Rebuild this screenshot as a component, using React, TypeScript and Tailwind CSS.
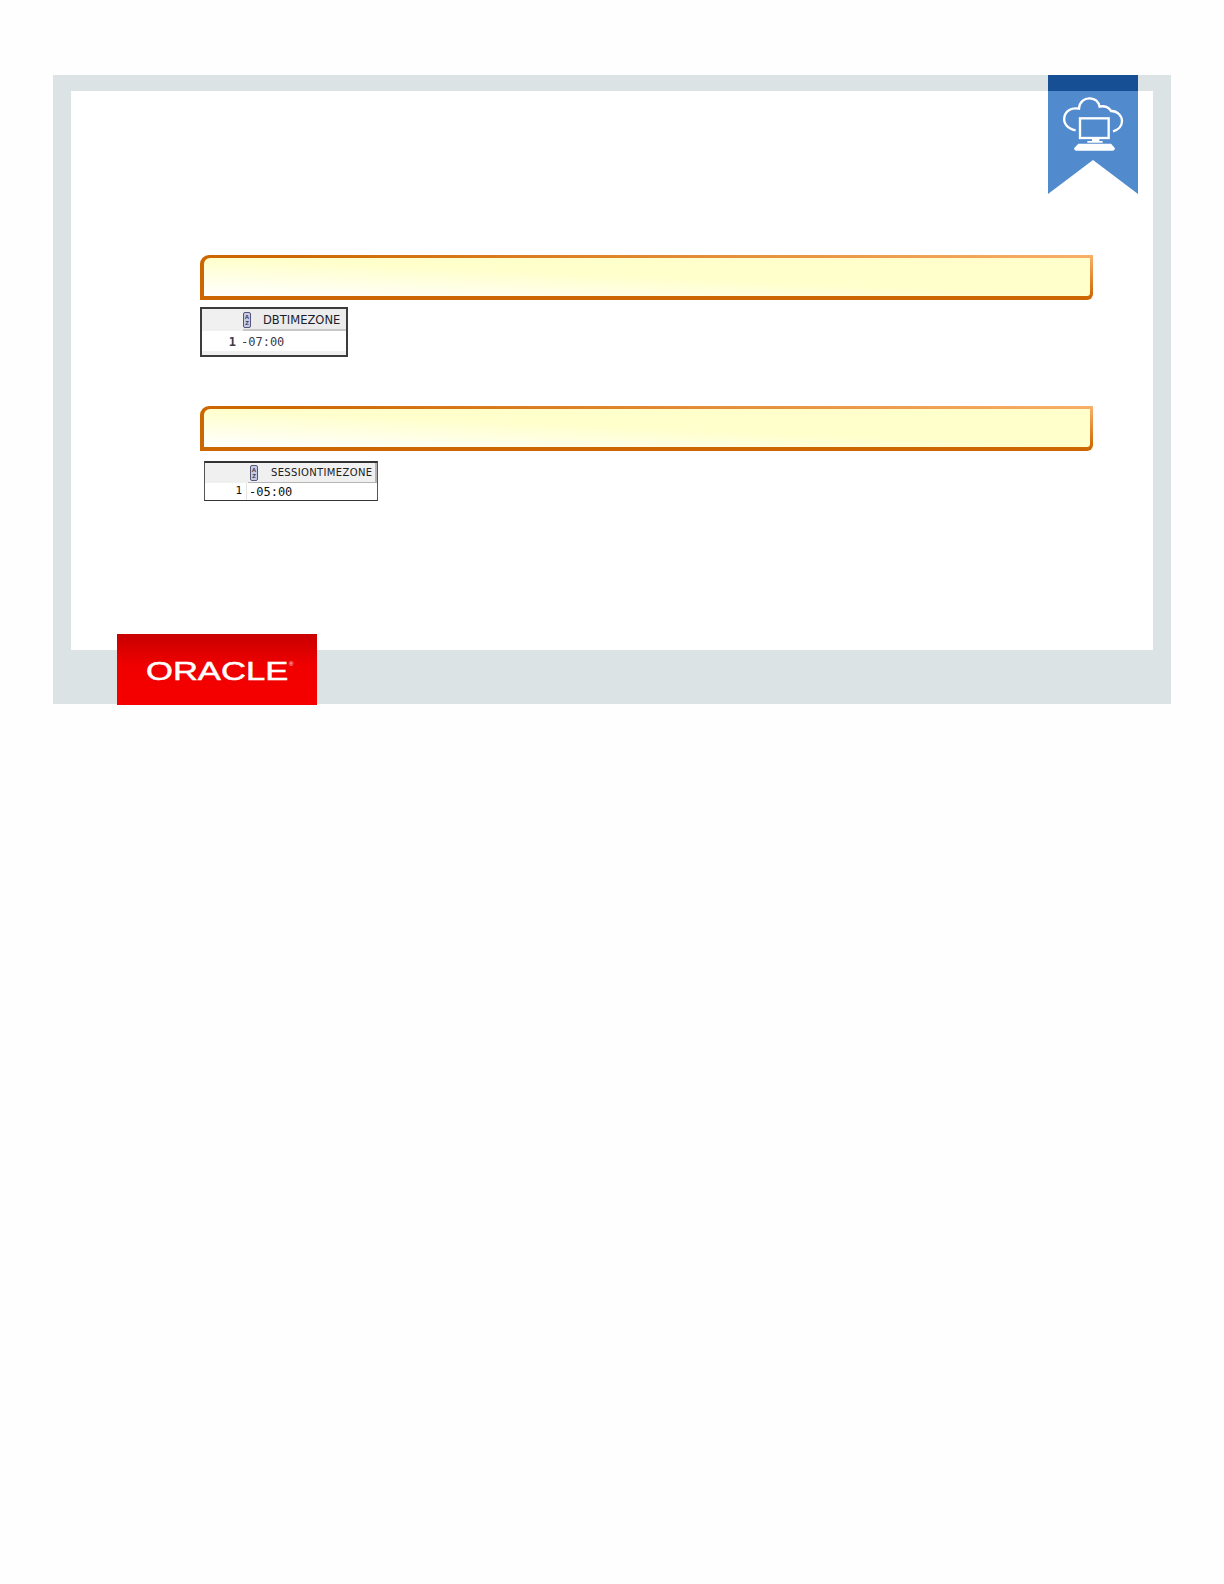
const mono = "font-['DejaVu_Sans_Mono',monospace]"
const sans = "font-['DejaVu_Sans',sans-serif]"

function CodeBox({ className }: { className: string }) {
  return (
    <div
      className={`h-[45px] w-[893px] rounded-tl-[9px] rounded-br-[6px] bg-[linear-gradient(to_top_right,#cc6600_52%,#f9b26c_100%)] pt-[3px] pr-[3px] pb-[4px] pl-[4px] ${className}`}
    >
      <div className="h-full w-full rounded-tl-[6px] rounded-br-[3px] bg-[linear-gradient(to_top_right,#ffffff_0%,#ffffcc_50%)]" />
    </div>
  )
}

function SortIcon() {
  return (
    <span className="flex h-[16px] w-[8px] flex-col items-center justify-center rounded-[2px] border border-[#55557a] bg-[#c9cbe2] font-['Liberation_Sans',sans-serif] text-[6px] leading-[6px] font-bold text-[#30304f]">
      <span>A</span>
      <span>Z</span>
    </span>
  )
}

function ResultOne() {
  return (
    <div className="mt-[7px] h-[50px] w-[148px] border-2 border-[#3c3c3c] bg-white">
      <div className="flex h-[22px] bg-[#f0f0f0]">
        <div className="w-[41px]" />
        <div className="flex flex-1 items-center border-b-2 border-[#c8c8c8] bg-[#ececec] pt-[2px]">
          <SortIcon />
          <span className={`ml-[12px] origin-left scale-x-[0.96] text-[12px] text-[#1c1c2c] ${sans}`}>DBTIMEZONE</span>
        </div>
      </div>
      <div className={`flex h-[20px] items-center pt-[1px] text-[12px] text-[#3a3a4a] ${mono}`}>
        <span className="w-[34px] text-right font-bold">1</span>
        <span className="ml-[5px]">-07:00</span>
      </div>
      <div className="h-[4px] bg-[#f0f0f0]" />
    </div>
  )
}

function ResultTwo() {
  return (
    <div className="mt-[10px] ml-[4px] h-[40px] w-[174px] border-x border-t-2 border-b border-x-[#555555] border-t-[#333333] border-b-[#333333] bg-white">
      <div className="flex h-[20px] bg-[#f0f0f0]">
        <div className="w-[43px]" />
        <div className="flex flex-1 items-center border-r-2 border-b border-[#b5b5b5] bg-[#f0f0f0] pl-[2px]">
          <SortIcon />
          <span className={`ml-[13px] text-[10px] tracking-[0.35px] text-[#202020] ${sans}`}>SESSIONTIMEZONE</span>
        </div>
      </div>
      <div className={`flex h-[17px] text-[12px] text-[#111111] ${mono}`}>
        <span className="flex w-[37px] items-center justify-end text-[11px]">1</span>
        <span className="ml-[4px] flex items-center border-l border-[#e4e4e4] pl-[2px] leading-none">-05:00</span>
      </div>
    </div>
  )
}

function Ribbon() {
  return (
    <div className="absolute top-0 right-[33px] h-[119px] w-[90px]">
      <div className="h-full w-full bg-[#528bcd] [clip-path:polygon(0_0,100%_0,100%_100%,50%_71.5%,0_100%)]">
        <div className="h-[16px] bg-[#164f93]" />
      </div>
      <svg
        viewBox="54 45 270 357"
        className="absolute inset-0 h-[119px] w-[90px]"
        fill="none"
        stroke="#ffffff"
        strokeWidth="7"
      >
        <path d="M137 211 C112 206 100 190 103 172 C106 152 125 142 147 146 C148 126 163 114 180 115 C196 116 206 126 209 140 C222 136 238 142 243 153 C262 152 276 168 276 183 C276 198 265 210 249 214" />
        <rect x="150" y="175" width="86" height="59" />
        <path d="M186 236 H208 V243 H218 V248 H172 V243 H186 Z" fill="#ffffff" stroke="none" />
        <path d="M145 251 H243 L255 265 Q255 272 248 272 H139 Q132 272 132 265 Z" fill="#ffffff" stroke="none" />
      </svg>
    </div>
  )
}

function OracleLogo() {
  return (
    <div className="absolute top-[559px] left-[64px] flex h-[71px] w-[200px] items-start bg-[linear-gradient(to_bottom,#c80000,#f00000_45%,#f60000)] pt-[23px] pl-[29px]">
      <span className="origin-left scale-x-[1.33] font-['Liberation_Sans',sans-serif] text-[26px] leading-[28px] text-white [-webkit-text-stroke:0.5px_#ffffff]">
        ORACLE
      </span>
      <span className="absolute top-[27px] left-[172px] font-['Liberation_Sans',sans-serif] text-[6px] leading-none text-white">®</span>
    </div>
  )
}

export default function App() {
  return (
    <div className="min-h-[1584px] bg-[#fefefe] pt-[75px] pl-[53px]">
      <div className="relative h-[629px] w-[1118px] bg-[#dce3e4] pt-[16px] pr-[18px] pb-[54px] pl-[18px]">
        <div className="h-full bg-white pt-[164px] pl-[129px]">
          <CodeBox className="" />
          <ResultOne />
          <CodeBox className="mt-[49px]" />
          <ResultTwo />
        </div>
        <Ribbon />
        <OracleLogo />
      </div>
    </div>
  )
}
